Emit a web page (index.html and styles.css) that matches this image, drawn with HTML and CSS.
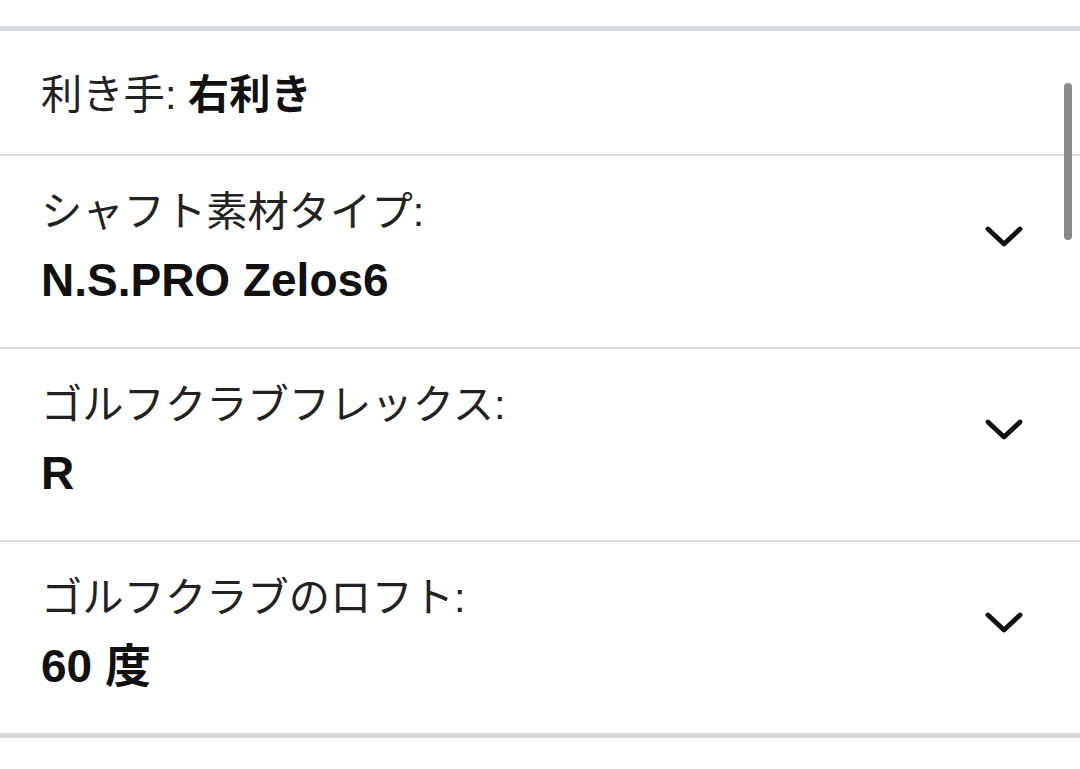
FILE: index.html
```html
<!DOCTYPE html>
<html lang="ja">
<head>
<meta charset="utf-8">
<title>Specs</title>
<link rel="stylesheet" href="styles.css">
</head>
<body>
<div class="spacer"></div>
<div class="list">
  <div class="row row-simple">
    <span class="label">利き手: </span><span class="strong">右利き</span>
  </div>
  <div class="row row-select">
    <div class="text">
      <div class="label">シャフト素材タイプ:</div>
      <div class="value">N.S.PRO Zelos6</div>
    </div>
    <svg class="chevron" viewBox="0 0 40 24" width="40" height="24"><path d="M4 4 L20 19 L36 4" fill="none" stroke="#111" stroke-width="4.8" stroke-linecap="round" stroke-linejoin="round"/></svg>
  </div>
  <div class="row row-select">
    <div class="text">
      <div class="label">ゴルフクラブフレックス:</div>
      <div class="value">R</div>
    </div>
    <svg class="chevron" viewBox="0 0 40 24" width="40" height="24"><path d="M4 4 L20 19 L36 4" fill="none" stroke="#111" stroke-width="4.8" stroke-linecap="round" stroke-linejoin="round"/></svg>
  </div>
  <div class="row row-select row-last">
    <div class="text">
      <div class="label">ゴルフクラブのロフト:</div>
      <div class="value">60 度</div>
    </div>
    <svg class="chevron" viewBox="0 0 40 24" width="40" height="24"><path d="M4 4 L20 19 L36 4" fill="none" stroke="#111" stroke-width="4.8" stroke-linecap="round" stroke-linejoin="round"/></svg>
  </div>
  <div class="scrollbar"></div>
</div>
</body>
</html>
```
FILE: styles.css
```css
html, body {
  margin: 0;
  padding: 0;
  background: #ffffff;
}
body {
  font-family: "Liberation Sans", "Noto Sans CJK JP", sans-serif;
  color: #1c1c1c;
  width: 1080px;
  height: 769px;
  overflow: hidden;
}
.spacer {
  height: 26px;
}
.list {
  position: relative;
  border-top: 5px solid #d6dade;
  border-bottom: 5px solid #d6d6d6;
}
.row {
  box-sizing: border-box;
  border-bottom: 2px solid #dadada;
  padding-left: 41px;
}
.row-last {
  border-bottom: none;
}
.row-simple {
  height: 125px;
  display: flex;
  align-items: center;
  font-size: 41.3px;
  line-height: 52px;
  padding-top: 4px;
}
.row-simple .label {
  white-space: pre;
  color: #222;
}
.strong {
  font-weight: 700;
  color: #111;
}
.row-select {
  height: 193px;
  display: flex;
  align-items: flex-start;
  padding-top: 30px;
  padding-right: 56px;
}
.row-last {
  height: 191px;
}
.text {
  flex: 1;
}
.label {
  font-size: 41.3px;
  line-height: 52px;
  color: #222;
}
.value {
  margin-top: 14px;
  font-size: 46px;
  line-height: 56px;
  font-weight: 700;
  color: #111;
}
.chevron {
  margin-top: 39px;
  flex: none;
}
.scrollbar {
  position: absolute;
  right: 8px;
  top: 52px;
  width: 8px;
  height: 157px;
  border-radius: 4px;
  background: #8a8a8a;
}
```
